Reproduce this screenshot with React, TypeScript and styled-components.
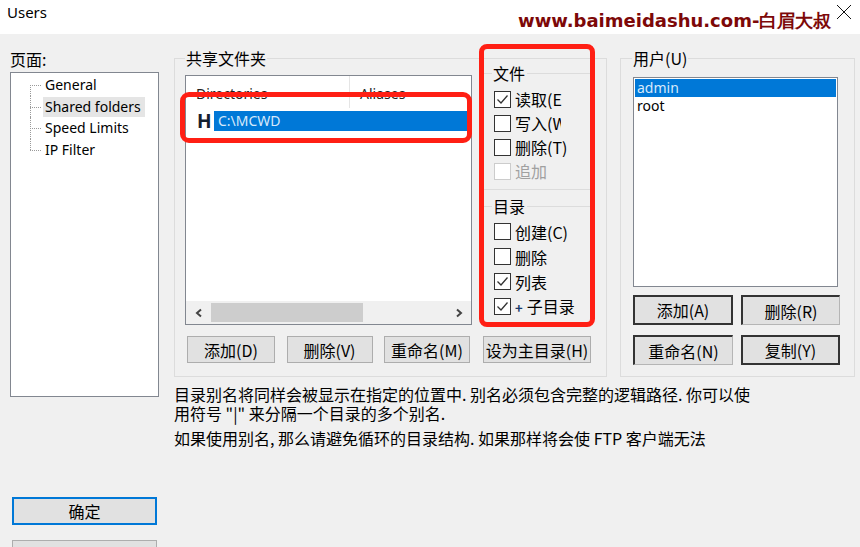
import React from "react";
import styled, { createGlobalStyle, css } from "styled-components";

const FONT = `"Noto Sans CJK SC", "Noto Sans", sans-serif`;
const LATIN = `"Noto Sans", "Noto Sans CJK SC", sans-serif`;

const Global = createGlobalStyle`
  html, body { margin: 0; padding: 0; background: #f0f0f0; }
  body { font-family: ${FONT}; }
`;

const Window = styled.div`
  position: relative;
  width: 860px;
  height: 547px;
  overflow: hidden;
  background: #f0f0f0;
  font-family: ${FONT};
  font-size: 16px;
  color: #000;
  display: flex;
  flex-direction: column;
`;

const TitleBar = styled.div`
  height: 34px;
  flex: none;
  background: #fff;
  display: flex;
  align-items: flex-start;
  justify-content: space-between;
  padding: 2px 6px 0 7px;
  box-sizing: border-box;
`;

const Title = styled.div`
  font-family: "Noto Sans", sans-serif;
  font-size: 15px;
  line-height: 20px;
`;

const CloseBtn = styled.div`
  width: 18px;
  height: 18px;
  margin-top: 2px;
  display: flex;
`;

const Watermark = styled.div`
  position: absolute;
  left: 518px;
  top: 10px;
  color: #7d0808;
  font-family: "DejaVu Sans", sans-serif;
  font-weight: bold;
  font-size: 18px;
  line-height: 22px;
  white-space: nowrap;
`;

const Body = styled.div`
  flex: 1;
  display: flex;
  padding-left: 10px;
`;

const LeftCol = styled.div`
  width: 149px;
  display: flex;
  flex-direction: column;
`;

const Label = styled.div`
  margin-top: 16px;
  line-height: 18px;
`;

const Tree = styled.div`
  margin-top: 4px;
  height: 325px;
  box-sizing: border-box;
  border: 1px solid #828790;
  background: #fff;
  padding-top: 1px;
`;

const TreeItem = styled.div`
  position: relative;
  height: 21.7px;
  margin-left: 32px;
  display: flex;
  align-items: center;
  &::before {
    content: "";
    position: absolute;
    left: -13px;
    width: 11px;
    top: 50%;
    border-top: 1px dotted #9a9a9a;
  }
  &::after {
    content: "";
    position: absolute;
    left: -13px;
    top: 0;
    bottom: 0;
    border-left: 1px dotted #9a9a9a;
  }
  &:first-child::after { top: 50%; }
  &:last-child::after { bottom: 50%; }
`;

const TreeLabel = styled.span<{ $selected?: boolean }>`
  padding: 0 4px 0 2px;
  height: 20px;
  line-height: 20px;
  font-family: ${LATIN};
  font-size: 14px;
  ${(p) => p.$selected && css`background: #e5e5e5;`}
`;

const Button = styled.div<{ $w?: number; $h?: number; $variant?: "default" | "focus" | "dark" | "half" }>`
  box-sizing: border-box;
  width: ${(p) => (p.$w ? `${p.$w}px` : "auto")};
  height: ${(p) => p.$h ?? 27}px;
  background: #e1e1e1;
  border: 1px solid #adadad;
  display: flex;
  align-items: center;
  justify-content: center;
  line-height: 18px;
  white-space: nowrap;
  ${(p) =>
    p.$variant === "focus" &&
    css`
      border: 2px solid #0078d7;
    `}
  ${(p) =>
    p.$variant === "dark" &&
    css`
      border: 2px solid #333;
    `}
  ${(p) =>
    p.$variant === "half" &&
    css`
      border-top: 2px solid #333;
      border-left: 2px solid #333;
      border-right: 1px solid #b5b5b5;
      border-bottom: 1px solid #b5b5b5;
    `}
`;

const OkButton = styled(Button)`
  margin: 100px 2px 0;
`;

const CancelButton = styled(Button)`
  margin: 15px 2px 0;
  align-items: flex-start;
  padding-top: 6px;
`;

const Main = styled.div`
  margin-left: 15px;
  display: flex;
  flex-direction: column;
`;

const TopRow = styled.div`
  margin-top: 24px;
  display: flex;
  gap: 13px;
`;

const Group = styled.div<{ $w: number }>`
  position: relative;
  box-sizing: border-box;
  width: ${(p) => p.$w}px;
  height: 319px;
  border: 1px solid #dcdcdc;
`;

const Legend = styled.div<{ $left: number }>`
  position: absolute;
  top: -10px;
  left: ${(p) => p.$left}px;
  padding: 0 1px;
  background: #f0f0f0;
  line-height: 18px;
`;

const SharedGrid = styled.div`
  padding: 16px 0 0 10px;
  display: grid;
  grid-template-columns: 287px 108px;
  grid-template-rows: 250px 27px;
  column-gap: 11px;
  row-gap: 11px;
`;

const ListView = styled.div`
  box-sizing: border-box;
  border: 1px solid #828790;
  background: #fff;
  display: flex;
  flex-direction: column;
`;

const Header = styled.div`
  height: 32px;
  display: flex;
  flex: none;
`;

const HeaderCell = styled.div<{ $w?: number }>`
  ${(p) => (p.$w ? css`width: ${p.$w}px; border-right: 1px solid #e5e5e5;` : css`flex: 1;`)}
  box-sizing: border-box;
  padding: 4px 0 0 10px;
  line-height: 28px;
  font-family: ${LATIN};
  font-size: 14px;
  color: #222;
`;

const Row = styled.div`
  margin-top: 3px;
  height: 20px;
  display: flex;
  flex: none;
`;

const DriveCell = styled.div`
  width: 28px;
  padding-left: 11px;
  box-sizing: border-box;
  font-family: "Noto Sans", sans-serif;
  font-weight: bold;
  font-size: 19px;
  line-height: 20px;
  color: #14202e;
`;

const SelectedCell = styled.div`
  flex: 1;
  background: #0078d7;
  color: #d7e9fb;
  padding-left: 4px;
  line-height: 20px;
  font-family: ${LATIN};
  font-size: 14px;
`;

const Spacer = styled.div`
  flex: 1;
`;

const HScroll = styled.div`
  height: 23px;
  flex: none;
  display: flex;
  align-items: center;
  background: #f0f0f0;
`;

const ScrollArrow = styled.div`
  width: 25px;
  height: 23px;
  display: flex;
  align-items: center;
  justify-content: center;
`;

const Thumb = styled.div`
  width: 152px;
  height: 19px;
  background: #cdcdcd;
`;

const Perms = styled.div`
  margin-top: -2px;
  display: flex;
  flex-direction: column;
`;

const PermGroup = styled.div<{ $first?: boolean }>`
  position: relative;
  border-top: 1px solid #dcdcdc;
  ${(p) =>
    p.$first
      ? css`
          padding: 13px 0 6px;
          border-bottom: 1px solid #dcdcdc;
        `
      : css`
          margin-top: 16px;
          padding-top: 12px;
        `}
`;

const PermTitle = styled.div`
  position: absolute;
  top: -10px;
  left: 9px;
  padding: 0 2px 0 1px;
  background: #f0f0f0;
  line-height: 18px;
`;

const CheckRow = styled.div<{ $h: number; $disabled?: boolean }>`
  height: ${(p) => p.$h}px;
  display: flex;
  align-items: center;
  gap: 4px;
  padding-left: 11px;
  color: ${(p) => (p.$disabled ? "#a0a0a0" : "#000")};
`;

const Box = styled.div<{ $disabled?: boolean }>`
  box-sizing: border-box;
  width: 17px;
  height: 17px;
  flex: none;
  border: 1px solid ${(p) => (p.$disabled ? "#cccccc" : "#333")};
  background: #fff;
  display: flex;
  align-items: center;
  justify-content: center;
`;

const CheckText = styled.span<{ $max?: number }>`
  max-width: ${(p) => (p.$max ? `${p.$max}px` : "none")};
  overflow: hidden;
  white-space: nowrap;
  line-height: 20px;
`;

const Plus = styled.span`
  font-size: 13px;
  font-weight: bold;
  color: #1a3a6a;
  margin-right: 4px;
`;

const ButtonRow = styled.div`
  display: flex;
  justify-content: space-between;
  padding: 0 2px;
`;

const UserInner = styled.div`
  padding: 18px 0 0 12px;
`;

const ListBox = styled.div`
  box-sizing: border-box;
  width: 205px;
  height: 210px;
  border: 1px solid #828790;
  background: #fff;
  padding: 1px;
`;

const ListItem = styled.div<{ $selected?: boolean }>`
  height: 18px;
  line-height: 18px;
  padding-left: 2px;
  font-family: ${LATIN};
  font-size: 14px;
  ${(p) =>
    p.$selected &&
    css`
      background: #0078d7;
      color: #d7e9fb;
    `}
`;

const UserButtons = styled.div`
  margin-top: 8px;
  display: grid;
  grid-template-columns: 100px 99px;
  grid-auto-rows: 30px;
  column-gap: 8px;
  row-gap: 10px;
`;

const Description = styled.div`
  margin-top: 8px;
  font-size: 16px;
  line-height: 19px;
  white-space: nowrap;
`;

const Para = styled.div<{ $gap?: number }>`
  margin-top: ${(p) => p.$gap ?? 0}px;
`;

const Annotation = styled.div<{ $x: number; $y: number; $w: number; $h: number; $r: number }>`
  position: absolute;
  left: ${(p) => p.$x}px;
  top: ${(p) => p.$y}px;
  width: ${(p) => p.$w}px;
  height: ${(p) => p.$h}px;
  box-sizing: border-box;
  border: 5px solid #ff1f14;
  border-radius: ${(p) => p.$r}px;
  pointer-events: none;
`;

const Check = () => (
  <svg width="13" height="13" viewBox="0 0 13 13">
    <polyline points="1.5,6.5 5,10 11.5,2.5" fill="none" stroke="#333" strokeWidth="1.3" />
  </svg>
);

type Perm = { label: string; checked?: boolean; disabled?: boolean; plus?: boolean; max?: number };

const filePerms: Perm[] = [
  { label: "读取(E", checked: true },
  { label: "写入(W", max: 46 },
  { label: "删除(T)" },
  { label: "追加", disabled: true },
];

const dirPerms: Perm[] = [
  { label: "创建(C)" },
  { label: "删除" },
  { label: "列表", checked: true },
  { label: "子目录", checked: true, plus: true },
];

const PermRow = ({ p, h }: { p: Perm; h: number }) => (
  <CheckRow $h={h} $disabled={p.disabled}>
    <Box $disabled={p.disabled}>{p.checked && <Check />}</Box>
    {p.plus ? (
      <CheckText>
        <Plus>+</Plus>
        {p.label}
      </CheckText>
    ) : (
      <CheckText $max={p.max}>{p.label}</CheckText>
    )}
  </CheckRow>
);

export default function App() {
  return (
    <>
      <Global />
      <Window>
        <TitleBar>
          <Title>Users</Title>
          <CloseBtn>
            <svg width="16" height="16" viewBox="0 0 16 16">
              <path d="M1 1 L15 15 M15 1 L1 15" stroke="#111" strokeWidth="1" />
            </svg>
          </CloseBtn>
        </TitleBar>
        <Body>
          <LeftCol>
            <Label>页面:</Label>
            <Tree>
              <TreeItem><TreeLabel>General</TreeLabel></TreeItem>
              <TreeItem><TreeLabel $selected>Shared folders</TreeLabel></TreeItem>
              <TreeItem><TreeLabel>Speed Limits</TreeLabel></TreeItem>
              <TreeItem><TreeLabel>IP Filter</TreeLabel></TreeItem>
            </Tree>
            <OkButton $h={28} $variant="focus">确定</OkButton>
            <CancelButton $h={28}>取消</CancelButton>
          </LeftCol>
          <Main>
            <TopRow>
              <Group $w={433}>
                <Legend $left={10}>共享文件夹</Legend>
                <SharedGrid>
                  <ListView>
                    <Header>
                      <HeaderCell $w={164}>Directories</HeaderCell>
                      <HeaderCell>Aliases</HeaderCell>
                    </Header>
                    <Row>
                      <DriveCell>H</DriveCell>
                      <SelectedCell>C:\MCWD</SelectedCell>
                    </Row>
                    <Spacer />
                    <HScroll>
                      <ScrollArrow>
                        <svg width="8" height="10" viewBox="0 0 8 10">
                          <polyline points="6,1.5 2,5 6,8.5" fill="none" stroke="#444" strokeWidth="2" />
                        </svg>
                      </ScrollArrow>
                      <Thumb />
                      <Spacer />
                      <ScrollArrow>
                        <svg width="8" height="10" viewBox="0 0 8 10">
                          <polyline points="2,1.5 6,5 2,8.5" fill="none" stroke="#444" strokeWidth="2" />
                        </svg>
                      </ScrollArrow>
                    </HScroll>
                  </ListView>
                  <Perms>
                    <PermGroup $first>
                      <PermTitle>文件</PermTitle>
                      {filePerms.map((p) => (
                        <PermRow key={p.label} p={p} h={24} />
                      ))}
                    </PermGroup>
                    <PermGroup>
                      <PermTitle>目录</PermTitle>
                      {dirPerms.map((p) => (
                        <PermRow key={p.label} p={p} h={25} />
                      ))}
                    </PermGroup>
                  </Perms>
                  <ButtonRow>
                    <Button $w={88}>添加(D)</Button>
                    <Button $w={86}>删除(V)</Button>
                    <Button $w={86}>重命名(M)</Button>
                  </ButtonRow>
                  <Button $w={108}>设为主目录(H)</Button>
                </SharedGrid>
              </Group>
              <Group $w={235}>
                <Legend $left={11}>用户(U)</Legend>
                <UserInner>
                  <ListBox>
                    <ListItem $selected>admin</ListItem>
                    <ListItem>root</ListItem>
                  </ListBox>
                  <UserButtons>
                    <Button $h={30} $variant="dark">添加(A)</Button>
                    <Button $h={30} $variant="half">删除(R)</Button>
                    <Button $h={30} $variant="half">重命名(N)</Button>
                    <Button $h={30} $variant="dark">复制(Y)</Button>
                  </UserButtons>
                </UserInner>
              </Group>
            </TopRow>
            <Description>
              <Para>
                目录别名将同样会被显示在指定的位置中. 别名必须包含完整的逻辑路径. 你可以使
                <br />
                用符号 "|" 来分隔一个目录的多个别名.
              </Para>
              <Para $gap={6}>如果使用别名, 那么请避免循环的目录结构. 如果那样将会使 FTP 客户端无法</Para>
            </Description>
          </Main>
        </Body>
        <Watermark>www.baimeidashu.com-白眉大叔</Watermark>
        <Annotation $x={180} $y={92} $w={292} $h={51} $r={9} />
        <Annotation $x={479} $y={44} $w={116} $h={283} $r={8} />
      </Window>
    </>
  );
}
